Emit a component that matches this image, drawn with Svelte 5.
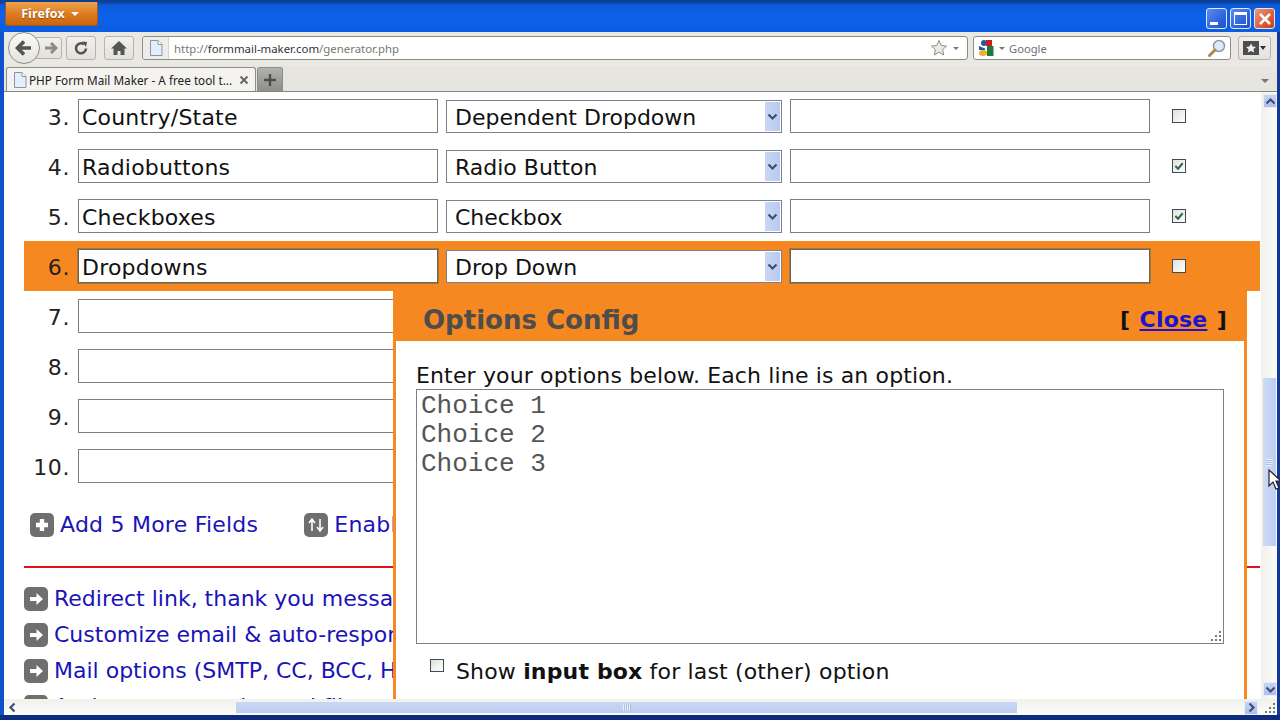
<script>
  const rows = [
    { n: 3, label: "Country/State", type: "Dependent Dropdown", checked: false },
    { n: 4, label: "Radiobuttons", type: "Radio Button", checked: true },
    { n: 5, label: "Checkboxes", type: "Checkbox", checked: true },
    { n: 6, label: "Dropdowns", type: "Drop Down", checked: false, active: true },
    { n: 7, label: "", type: "", checked: false },
    { n: 8, label: "", type: "", checked: false },
    { n: 9, label: "", type: "", checked: false },
    { n: 10, label: "", type: "", checked: false },
  ];

  const links = [
    "Redirect link, thank you message",
    "Customize email & auto-responder",
    "Mail options (SMTP, CC, BCC, HTML)",
    "Anti-spam, captcha and file uploads",
  ];
</script>

{#snippet pageIcon()}
  <svg class="page-icon" width="14" height="16" viewBox="0 0 14 16">
    <path d="M1.5 .5h7.5l4 4v11h-11.500z" fill="#e4edfb" stroke="#8a94a6" />
    <path d="M9 .5v4h4" fill="#fff" stroke="#8a94a6" />
  </svg>
{/snippet}

{#snippet chevron(d)}
  <svg width="11" height="11" viewBox="0 0 11 11">
    <path {d} fill="none" stroke="#3d4f78" stroke-width="2.2" />
  </svg>
{/snippet}

{#snippet badge(kind)}
  <span class="badge">
    <svg width="24" height="24" viewBox="0 0 24 24">
      {#if kind === "plus"}
        <path d="M12 6v12M6 12h12" stroke="#fff" stroke-width="4.4" />
      {:else if kind === "sort"}
        <path d="M8 18V7M5 10l3-4 3 4M16 6v11M13 14l3 4 3-4" fill="none" stroke="#fff" stroke-width="1.6" />
      {:else}
        <path d="M6 12h8" stroke="#fff" stroke-width="4" />
        <path d="M12.5 6l6.5 6-6.500 6z" fill="#fff" />
      {/if}
    </svg>
  </span>
{/snippet}

<div class="window">
  <header class="titlebar">
    <button class="firefox">Firefox <i class="caret"></i></button>
    <div class="winbtns">
      <span class="winbtn"><b class="min"></b></span>
      <span class="winbtn"><b class="max"></b></span>
      <span class="winbtn close">
        <svg width="14" height="14" viewBox="0 0 14 14"><path d="M2 2l10 10M12 2L2 12" stroke="#fff" stroke-width="2.6" /></svg>
      </span>
    </div>
  </header>

  <div class="chrome">
    <nav class="navbar">
      <div class="backfwd">
        <span class="back">
          <svg width="20" height="20" viewBox="0 0 20 20">
            <path d="M10 3.500L3.500 10l6.500 6.500M4 10h13" fill="none" stroke="#555" stroke-width="3.600" />
          </svg>
        </span>
        <span class="fwd">
          <svg width="14" height="14" viewBox="0 0 14 14">
            <path d="M7 2l5 5-5 5M1 7h10" fill="none" stroke="#8b8b85" stroke-width="3" />
          </svg>
        </span>
      </div>
      <span class="toolbtn">
        <svg width="16" height="16" viewBox="0 0 16 16">
          <path d="M13 8.500a5 5 0 1 1-2-4.200" fill="none" stroke="#555" stroke-width="2.600" />
          <path d="M9 1.500l5 .5-1 5z" fill="#555" />
        </svg>
      </span>
      <span class="toolbtn">
        <svg width="18" height="16" viewBox="0 0 18 16">
          <path d="M9 1L1 8.500h2.500V15h4v-4h3v4h4V8.500H17z" fill="#555" />
        </svg>
      </span>
      <div class="urlbar">
        <span class="identity">{@render pageIcon()}</span>
        <span class="url">http://<b>formmail-maker.com</b>/generator.php</span>
        <svg width="18" height="18" viewBox="0 0 18 18">
          <path d="M9 1.500l2.300 5 5.200.6-3.900 3.500 1.100 5.400L9 13.300 4.300 16l1.100-5.400L1.500 7.100l5.200-.6z" fill="#eceae4" stroke="#8d8d88" />
        </svg>
        <i class="caret grey tiny"></i>
      </div>
      <div class="searchbar">
        <svg width="18" height="18" viewBox="0 0 18 18">
          <circle cx="6" cy="4" r="3" fill="#2a55a8" />
          <path d="M8 1h6v6H8z" fill="#c8201e" />
          <path d="M9 7h6.500v10H9z" fill="#1c7a3a" />
          <path d="M1 7l6 2.500V11H1z" fill="#2a55a8" />
          <ellipse cx="5" cy="14" rx="4" ry="3" fill="#e6b52e" />
        </svg>
        <i class="caret grey tiny"></i>
        <span class="engine">Google</span>
        <svg width="20" height="20" viewBox="0 0 20 20">
          <circle cx="12" cy="8" r="5.500" fill="#dce9f7" stroke="#8d9aa8" stroke-width="1.500" />
          <path d="M8 12l-5.500 5.500" stroke="#b08a4a" stroke-width="3" stroke-linecap="round" />
        </svg>
      </div>
      <span class="bookmarks">
        <svg width="16" height="14" viewBox="0 0 16 14">
          <path d="M0 0h16v14H0z" fill="#4e4e4e" />
          <path d="M8 2.500l1.600 3 3.400.4-2.500 2.300.7 3.300L8 9.900l-3.200 1.600.7-3.300L3 5.900l3.400-.4z" fill="#eee" />
        </svg>
        <i class="caret dark"></i>
      </span>
    </nav>

    <div class="tabbar">
      <div class="tab">
        {@render pageIcon()}
        <span class="tab-title">PHP Form Mail Maker - A free tool t...</span>
        <svg class="tab-close" width="10" height="10" viewBox="0 0 10 10"><path d="M1.500 1.500l7 7M8.500 1.500l-7 7" stroke="#666" stroke-width="2" /></svg>
      </div>
      <div class="newtab">
        <svg width="14" height="14" viewBox="0 0 14 14"><path d="M7 1v12M1 7h12" stroke="#4c4c4c" stroke-width="2.400" /></svg>
      </div>
      <i class="caret grey alltabs"></i>
    </div>

    <div class="main">
      <div class="page">
        <div class="rows">
          {#each rows as row}
            <div class="row" class:active={row.active}>
              <span class="num">{row.n}.</span>
              <input class="field" type="text" value={row.label} />
              <div class="select">
                <span class="select-value">{row.type}</span>
                <span class="select-arrow">{@render chevron("M1.500 3.500l4 4 4-4")}</span>
              </div>
              <input class="field" type="text" value="" />
              <span class="check">
                {#if row.checked}
                  <svg width="12" height="12" viewBox="0 0 13 13"><path d="M2.500 6.500l3 3 5-6" fill="none" stroke="#2f6b4a" stroke-width="2.200" /></svg>
                {/if}
              </span>
            </div>
          {/each}
        </div>

        <div class="actions">
          <a href="#add">{@render badge("plus")} Add 5 More Fields</a>
          <a href="#sort">{@render badge("sort")} Enable Field Sorting</a>
        </div>

        <hr class="rule" />

        <ul class="linklist">
          {#each links as link}
            <li><a href="#more">{@render badge("arrow")} {link}</a></li>
          {/each}
        </ul>

        <section class="popup">
          <div class="popup-head">
            <h2>Options Config</h2>
            <span class="popup-close">[ <a href="#close">Close</a> ]</span>
          </div>
          <div class="popup-body">
            <p>Enter your options below. Each line is an option.</p>
            <div class="textarea">
              <pre>Choice 1
Choice 2
Choice 3</pre>
              <svg class="grip" width="12" height="12" viewBox="0 0 12 12">
                <path d="M9 1h2v2H9zM5 5h2v2H5zM9 5h2v2H9zM1 9h2v2H1zM5 9h2v2H5zM9 9h2v2H9z" fill="#777" />
              </svg>
            </div>
            <label class="other">
              <span class="check small"></span>
              <span class="other-text">Show <b>input box</b> for last (other) option</span>
            </label>
          </div>
        </section>
      </div>

      <div class="vscroll">
        <span class="sbtn">{@render chevron("M1.500 7.500l4-4 4 4")}</span>
        <div class="vtrack">
          <div class="vthumb"><i class="vgrip"></i></div>
        </div>
        <span class="sbtn">{@render chevron("M1.500 3.500l4 4 4-4")}</span>
      </div>
    </div>

    <div class="hscroll">
      <span class="sbtn plain">{@render chevron("M7.500 1.500l-4 4 4 4")}</span>
      <div class="htrack">
        <div class="hthumb"><i class="hgrip"></i></div>
      </div>
      <span class="sbtn">{@render chevron("M3.500 1.500l4 4-4 4")}</span>
      <span class="resizer">
        <svg width="12" height="12" viewBox="0 0 12 12">
          <path d="M9 1h2v2H9zM5 5h2v2H5zM9 5h2v2H9zM1 9h2v2H1zM5 9h2v2H5zM9 9h2v2H9z" fill="#6f7a68" />
        </svg>
      </span>
    </div>
  </div>

  <div class="frame-bottom"></div>

  <svg class="cursor" width="14" height="22" viewBox="0 0 14 22">
    <path d="M1 1v16l4-4 3 7 3-1-3-7h5z" fill="#fff" stroke="#222" stroke-width="1.200" />
  </svg>
</div>

<style>
  :global(body) {
    margin: 0;
    overflow: hidden;
  }

  .window {
    position: relative;
    width: 1280px;
    height: 720px;
    display: flex;
    flex-direction: column;
    overflow: hidden;
    font-family: "DejaVu Sans", sans-serif;
    color: #111;
  }

  .titlebar {
    flex: none;
    height: 32px;
    box-sizing: border-box;
    padding: 2px 5px 0 5px;
    display: flex;
    justify-content: space-between;
    background: linear-gradient(to bottom, #0b3f95 0, #0b3f95 2px, #0a5ad8 5px, #0d62ea 14px, #0c5ce2 32px);
  }

  .firefox {
    width: 93px;
    height: 24px;
    padding: 0 3px 0 0;
    border: 1px solid #a3581a;
    border-top: 0;
    border-radius: 0 0 3px 3px;
    background: linear-gradient(to bottom, #f0a24a, #dc7a20 55%, #c9660f);
    color: #fff;
    font: bold 12.500px "Open Sans", sans-serif;
    text-shadow: 0 1px 1px #8a4a10;
    display: flex;
    align-items: center;
    justify-content: center;
    gap: 6px;
  }

  .caret {
    display: inline-block;
    flex: none;
    width: 0;
    height: 0;
    border-left: 4px solid transparent;
    border-right: 4px solid transparent;
    border-top: 4px solid #fff;
  }
  .caret.grey {
    border-top-color: #777;
  }
  .caret.tiny {
    border-left-width: 3px;
    border-right-width: 3px;
    border-top-width: 3px;
  }
  .caret.dark {
    border-left-width: 3px;
    border-right-width: 3px;
    border-top-color: #333;
  }

  .winbtns {
    display: flex;
    gap: 3px;
    margin-top: 6px;
  }
  .winbtn {
    width: 19px;
    height: 19px;
    border: 1px solid #dfe9fb;
    border-radius: 3px;
    background: linear-gradient(135deg, #5a8cf0, #2b5fd8 70%, #2251c4);
    display: flex;
    align-items: center;
    justify-content: center;
    position: relative;
  }
  .winbtn.close {
    background: linear-gradient(135deg, #ec9a80, #d8532c 70%, #c8431f);
  }
  .min {
    width: 8px;
    height: 3px;
    background: #fff;
    align-self: flex-end;
    margin: 0 5px 3px 0;
  }
  .max {
    width: 11px;
    height: 9px;
    border: 1px solid #fff;
    border-top-width: 3px;
  }

  .chrome {
    flex: 1;
    min-height: 0;
    display: flex;
    flex-direction: column;
    border-left: 4px solid #1150cc;
    border-right: 3px solid #12399a;
  }

  .navbar {
    flex: none;
    height: 34px;
    box-sizing: border-box;
    display: flex;
    align-items: center;
    padding: 0 6px 2px 4px;
    background: #e9e8e3;
  }

  .backfwd {
    display: flex;
    align-items: center;
    width: 59px;
    margin-right: 4px;
  }
  .back {
    width: 30px;
    height: 30px;
    border: 1px solid #8f8f8a;
    border-radius: 50%;
    background: linear-gradient(to bottom, #fafaf8, #e4e3de);
    display: flex;
    align-items: center;
    justify-content: center;
    z-index: 1;
    flex: none;
  }
  .fwd {
    width: 28px;
    height: 22px;
    margin-left: -6px;
    padding-left: 5px;
    box-sizing: border-box;
    border: 1px solid #b4b3ae;
    border-radius: 0 3px 3px 0;
    background: linear-gradient(to bottom, #f1f0ec, #e2e1dc);
    display: flex;
    align-items: center;
    justify-content: center;
  }
  .toolbtn {
    width: 28px;
    height: 22px;
    margin-right: 8px;
    border: 1px solid #b4b3ae;
    border-radius: 3px;
    background: linear-gradient(to bottom, #f1f0ec, #e2e1dc);
    display: flex;
    align-items: center;
    justify-content: center;
    flex: none;
  }
  .toolbtn:last-of-type {
    margin-right: 6px;
  }

  .urlbar,
  .searchbar {
    border: 1px solid #8d8d88;
    border-radius: 3px;
    background: #fff;
    display: flex;
    align-items: center;
    flex: none;
  }
  .urlbar {
    width: 826px;
    margin-right: 5px;
    padding-right: 8px;
    box-sizing: border-box;
    height: 24px;
    gap: 5px;
  }
  .identity {
    width: 25px;
    height: 22px;
    background: #eeede8;
    border-right: 1px solid #d4d3ce;
    border-radius: 3px 0 0 3px;
    display: flex;
    align-items: center;
    justify-content: center;
    flex: none;
  }
  .url {
    flex: 1;
    font: 11.400px "Noto Sans", sans-serif;
    color: #77776f;
  }
  .url b {
    font-weight: normal;
    color: #333;
  }

  .searchbar {
    width: 258px;
    height: 24px;
    box-sizing: border-box;
    padding: 0 3px 0 4px;
    margin-right: 7px;
    gap: 3px;
  }
  .engine {
    flex: 1;
    margin-left: 1px;
    font: 11.200px "Noto Sans", sans-serif;
    color: #6f6f6f;
  }

  .bookmarks {
    width: 34px;
    height: 22px;
    border: 1px solid #b4b3ae;
    border-radius: 3px;
    background: linear-gradient(to bottom, #f1f0ec, #e2e1dc);
    display: flex;
    align-items: center;
    justify-content: center;
    gap: 1px;
  }

  .tabbar {
    flex: none;
    height: 26px;
    box-sizing: border-box;
    display: flex;
    align-items: flex-end;
    padding-left: 2px;
    background: #e6e5e0;
    border-bottom: 1px solid #87877f;
  }
  .tab {
    width: 250px;
    height: 24px;
    box-sizing: border-box;
    padding: 1px 6px 0 6px;
    display: flex;
    align-items: center;
    gap: 2px;
    border: 1px solid #8d8d88;
    border-bottom: 0;
    border-radius: 3px 3px 0 0;
    background: #f4f3f0;
  }
  .page-icon,
  .tab-close {
    flex: none;
  }
  .tab-title {
    flex: 1;
    min-width: 0;
    font: 11.750px "Noto Sans", sans-serif;
    color: #222;
    white-space: nowrap;
  }
  .newtab {
    width: 26px;
    height: 24px;
    box-sizing: border-box;
    margin-left: 1px;
    border: 1px solid #8d8d88;
    border-bottom: 0;
    border-radius: 3px 3px 0 0;
    background: linear-gradient(to bottom, #b0b0ac, #8e8e8a);
    display: flex;
    align-items: center;
    justify-content: center;
  }
  .alltabs {
    margin: 0 8px 8px auto;
  }

  .main {
    flex: 1;
    min-height: 0;
    display: flex;
  }

  .page {
    position: relative;
    flex: 1;
    min-width: 0;
    overflow: hidden;
    background: #fff;
    padding: 0 1px 0 20px;
    font-size: 22px;
  }

  .rows {
    margin-top: -1px;
  }
  .row {
    height: 50px;
    box-sizing: border-box;
    display: flex;
    align-items: center;
  }
  .row.active {
    background: #f58820;
  }
  .row.active .field {
    border-color: #6d6355;
    box-shadow: 0 0 0 1px #a8773c;
  }
  .num {
    width: 46px;
    padding-top: 2px;
    text-align: right;
    margin-right: 8px;
    flex: none;
    color: #222;
    letter-spacing: 0.6px;
  }
  .field {
    width: 360px;
    height: 34px;
    box-sizing: border-box;
    flex: none;
    margin: 0 8px 0 0;
    padding: 2px 3px 0;
    border: 1px solid #7d7d7d;
    border-radius: 0;
    background: #fff;
    font: 22px "DejaVu Sans", sans-serif;
    letter-spacing: 0.2px;
    color: #111;
    outline: none;
  }
  .select {
    width: 336px;
    height: 33px;
    box-sizing: border-box;
    flex: none;
    margin-right: 8px;
    padding: 1px 1px 1px 8px;
    border: 1px solid #7b8190;
    background: #fff;
    display: flex;
    align-items: center;
    justify-content: space-between;
  }
  .select-value {
    padding-top: 2px;
    color: #111;
  }
  .select-arrow {
    width: 15px;
    height: 29px;
    background: linear-gradient(to right, #c9d7f4, #b9caf0);
    display: flex;
    align-items: center;
    justify-content: center;
  }
  .check {
    flex: none;
    width: 12px;
    height: 12px;
    margin: -1px 0 0 14px;
    border: 1px solid #3f4a5c;
    background: linear-gradient(135deg, #e0e0da, #fff);
    display: flex;
  }
  .check.small {
    margin: 1px 0 0;
    height: 11px;
  }

  .actions {
    display: flex;
    gap: 46px;
    padding: 21px 0 0 6px;
  }
  .actions a {
    letter-spacing: 0.23px;
  }
  .actions a,
  .linklist a {
    color: #1a13b8;
    text-decoration: none;
    display: flex;
    align-items: center;
    gap: 6px;
    white-space: nowrap;
  }

  .badge {
    width: 24px;
    height: 24px;
    flex: none;
    border-radius: 5px;
    background: #6f6f6f;
    display: flex;
  }

  .rule {
    margin: 29px 0 0;
    border: 0;
    height: 2px;
    background: #e2101c;
  }

  .linklist {
    list-style: none;
    margin: 18px 0 0;
    padding: 0;
    display: flex;
    flex-direction: column;
    gap: 10px;
  }
  .linklist li {
    height: 26px;
  }

  .popup {
    position: absolute;
    left: 389px;
    top: 199px;
    width: 854px;
    height: 460px;
    box-sizing: border-box;
    border: solid #f58820;
    border-width: 0 3px;
    background: #fff;
  }
  .popup-head {
    height: 50px;
    box-sizing: border-box;
    margin: 0 -3px;
    padding: 7px 20px 0 30px;
    background: #f58820;
    display: flex;
    align-items: center;
    justify-content: space-between;
  }
  .popup-head h2 {
    margin: 0;
    font-size: 26px;
    font-weight: bold;
    color: #4d4d4d;
  }
  .popup-close {
    font-weight: bold;
    font-size: 22px;
    letter-spacing: 0.2px;
    word-spacing: 1.500px;
  }
  .popup-close a {
    color: #1a13d0;
  }
  .popup-body {
    padding: 22px 20px 0 20px;
  }
  .popup-body p {
    margin: 0;
    line-height: 26px;
    letter-spacing: 0.14px;
  }
  .textarea {
    position: relative;
    height: 255px;
    box-sizing: border-box;
    padding: 2px 4px;
    border: 1px solid #808080;
  }
  .textarea pre {
    margin: 0;
    font: 26px/29px "Liberation Mono", monospace;
    color: #555;
  }
  .grip {
    position: absolute;
    right: 1px;
    bottom: 1px;
  }
  .other {
    display: flex;
    gap: 12px;
    margin: 14px 0 0 14px;
  }
  .other-text {
    margin-top: 1px;
    letter-spacing: 0.16px;
  }

  .sbtn {
    flex: none;
    width: 14px;
    height: 14px;
    border: 1px solid #e6ecf8;
    background: linear-gradient(to bottom, #c6d4f3, #aebfe9);
    display: flex;
    align-items: center;
    justify-content: center;
    box-sizing: border-box;
  }
  .sbtn.plain {
    border-color: transparent;
    background: none;
  }

  .vscroll {
    flex: none;
    width: 16px;
    box-sizing: border-box;
    padding: 2px 1px 3px 2px;
    display: flex;
    flex-direction: column;
    background: linear-gradient(to right, #f2f2ec, #fbfbf8);
  }
  .vtrack {
    flex: 1;
    padding-top: 270px;
  }
  .vthumb {
    width: 13px;
    height: 168px;
    background: linear-gradient(to right, #cfdcf6, #bccdf1);
    display: flex;
    align-items: center;
    justify-content: center;
  }
  .vgrip {
    width: 7px;
    height: 7px;
    background: repeating-linear-gradient(to bottom, #e8eefb 0 1px, #aebfe4 1px 2px);
  }

  .hscroll {
    flex: none;
    height: 16px;
    box-sizing: border-box;
    display: flex;
    align-items: center;
    padding: 1px 0 0 1px;
    background: linear-gradient(to bottom, #f1f1ec, #fbfbf8);
  }
  .htrack {
    flex: 1;
    align-self: stretch;
    padding: 2px 0 2px 217px;
    display: flex;
  }
  .hthumb {
    width: 781px;
    background: linear-gradient(to bottom, #c9d7f5, #bccdf1);
    display: flex;
    align-items: center;
    justify-content: center;
  }
  .hgrip {
    width: 8px;
    height: 7px;
    background: repeating-linear-gradient(to right, #e8eefb 0 1px, #aebfe4 1px 2px);
  }
  .resizer {
    flex: none;
    width: 19px;
    display: flex;
    justify-content: flex-end;
    padding-right: 1px;
    box-sizing: border-box;
  }

  .frame-bottom {
    flex: none;
    height: 5px;
    background: #0d2c80;
  }

  .cursor {
    position: absolute;
    left: 1268px;
    top: 469px;
  }
</style>
